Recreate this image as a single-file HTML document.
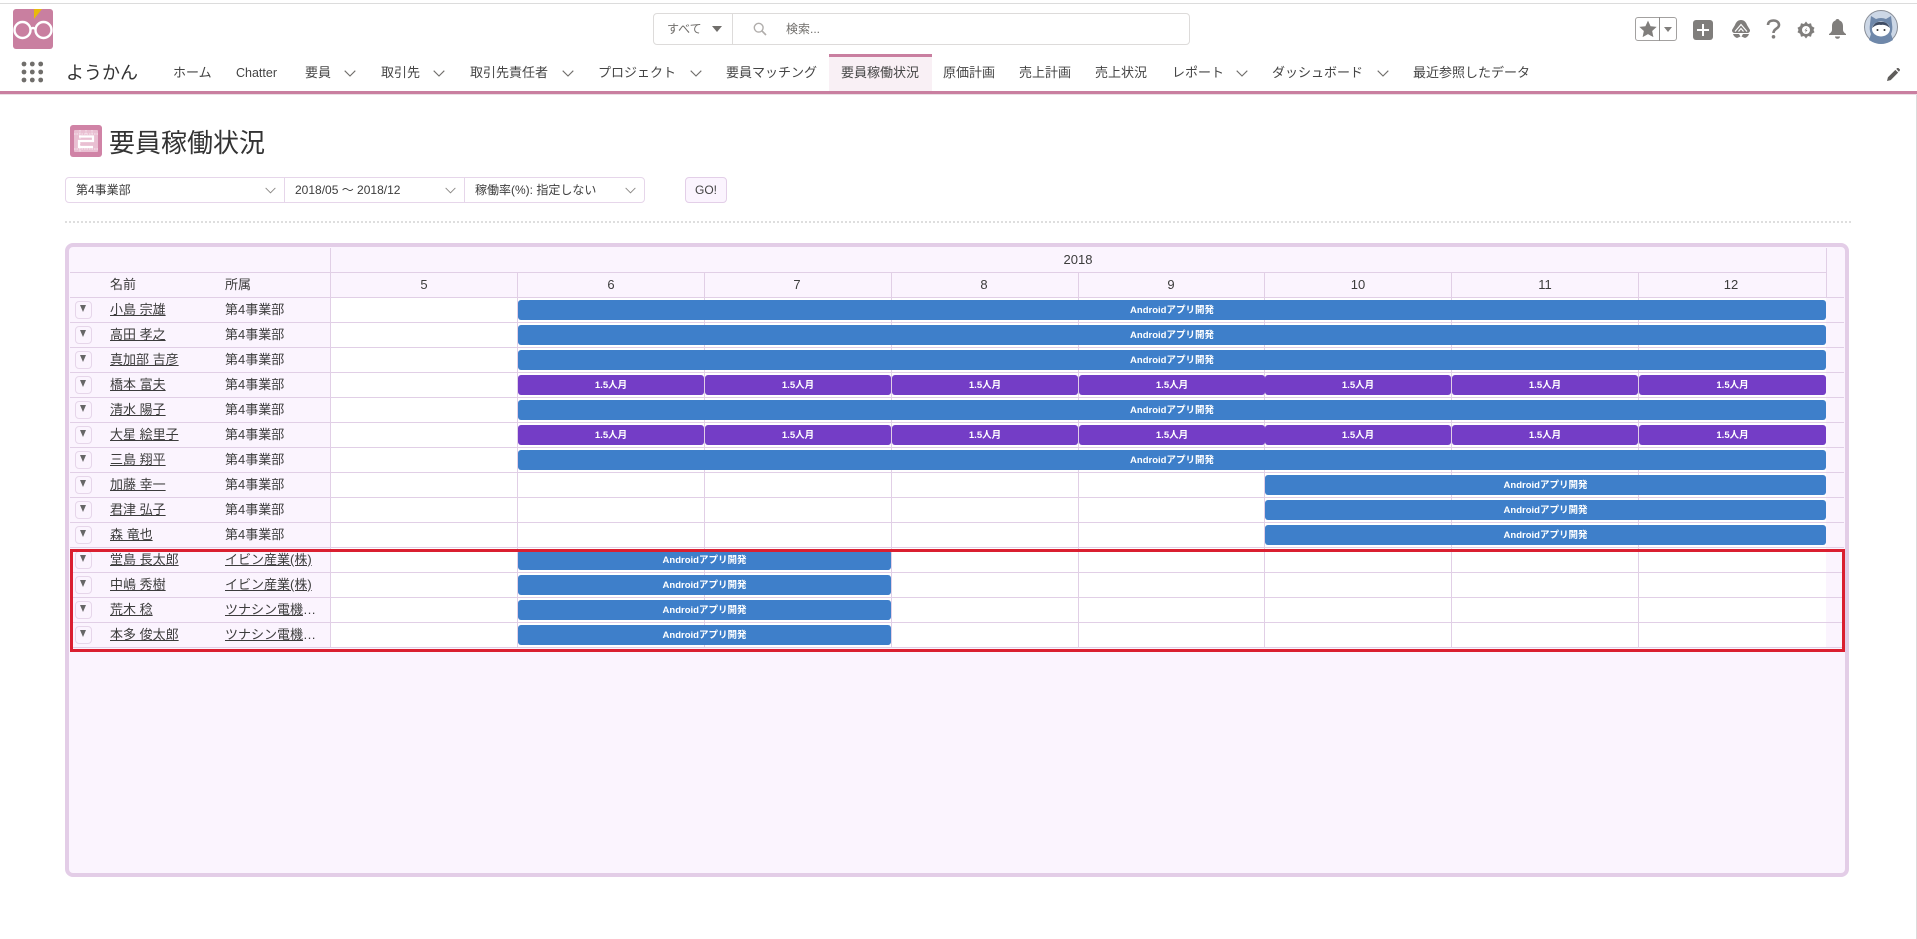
<!DOCTYPE html>
<html lang="ja"><head><meta charset="utf-8"><title>要員稼働状況</title>
<style>
*{box-sizing:border-box}
html,body{margin:0;padding:0;width:1917px;height:939px;overflow:hidden;background:#fff;font-family:"Liberation Sans","Noto Sans CJK JP",sans-serif;color:#3c3c3c}
.a{position:absolute}
.t{position:absolute;white-space:nowrap;line-height:20px;font-size:13px;color:#3c3c3c}
.nav{top:63px;color:#444}
.chev{position:absolute;width:12px;height:7px}
.r{position:absolute;left:70px;width:1774px;height:26px;border-top:1px solid #e1cfe6;border-bottom:1px solid #e1cfe6}
.w{position:absolute;top:0;bottom:0;left:261px;width:1495px;background:#fff}
.c{position:absolute;width:1px;top:272px;height:375px;background:#e1cfe6}
.dd{position:absolute;left:5px;top:3px;width:17px;height:18px;border:1px solid #e6d6ea;border-radius:4px;background:#fbf4fe}
.dd:after{content:"";position:absolute;left:4px;top:3px;border-left:3.5px solid transparent;border-right:3.5px solid transparent;border-top:7px solid #666}
.n{position:absolute;top:2px;left:40px;line-height:20px;font-size:13px;text-decoration:underline;white-space:nowrap;color:#3c3c3c}
.o{position:absolute;top:2px;left:155px;line-height:20px;font-size:13px;white-space:nowrap;color:#3c3c3c}
.b,.p{position:absolute;top:2px;height:20px;border-radius:3px;color:#fff;font-size:9.5px;font-weight:bold;text-align:center;line-height:21px;white-space:nowrap}
.b{background:#3e7fca}
.p{background:#743dc6;width:186px}
.h{position:absolute;font-size:13px;line-height:24px;text-align:center;width:186px;top:273px;color:#3c3c3c}
</style></head><body>

<div class="a" style="left:0;top:3px;width:1917px;height:1px;background:#dcdcdc"></div>

<!-- logo -->
<svg class="a" style="left:13px;top:9px" width="40" height="40" viewBox="0 0 40 40"><rect width="40" height="40" rx="3" fill="#c97fa0"/><path d="M21 0h8l-8 10z" fill="#e8b90c"/><circle cx="9.500" cy="21" r="8" fill="none" stroke="#fff" stroke-width="2.400"/><circle cx="30.500" cy="21" r="8" fill="none" stroke="#fff" stroke-width="2.400"/><path d="M17.500 20q2.500-2 5 0" fill="none" stroke="#fff" stroke-width="2.400"/></svg>

<!-- search -->
<div class="a" style="left:653px;top:13px;width:537px;height:32px;border:1px solid #dddbda;border-radius:4px;background:#fff"></div>
<div class="a" style="left:732px;top:14px;width:1px;height:30px;background:#dddbda"></div>
<div class="t" style="left:667px;top:19px;font-size:12px;color:#706e6b">すべて</div>
<div class="a" style="left:712px;top:26px;border-left:5px solid transparent;border-right:5px solid transparent;border-top:6px solid #706e6b"></div>
<svg class="a" style="left:753px;top:22px" width="14" height="14" viewBox="0 0 14 14"><circle cx="5.700" cy="5.700" r="4.400" fill="none" stroke="#b0adab" stroke-width="1.400"/><path d="M9 9l4 4" stroke="#b0adab" stroke-width="1.600"/></svg>
<div class="t" style="left:786px;top:19px;font-size:12px;color:#706e6b">検索...</div>

<!-- header right icons -->
<div class="a" style="left:1635px;top:17px;width:42px;height:24px;border:1px solid #a3a1a0;border-radius:3px"></div>
<div class="a" style="left:1659px;top:17px;width:1px;height:24px;background:#8f8d8b"></div>
<svg class="a" style="left:1639px;top:20px" width="18" height="18" viewBox="0 0 16 16"><path d="M8 .5l2.300 5 5.400.6-4 3.700 1.100 5.400L8 12.500l-4.800 2.700 1.100-5.400-4-3.700 5.400-.6z" fill="#807e7c"/></svg>
<div class="a" style="left:1664px;top:27px;border-left:4px solid transparent;border-right:4px solid transparent;border-top:5px solid #807e7c"></div>
<svg class="a" style="left:1693px;top:20px" width="20" height="20" viewBox="0 0 20 20"><rect width="20" height="20" rx="3" fill="#807e7c"/><path d="M10 4v12M4 10h12" stroke="#fff" stroke-width="2"/></svg>
<svg class="a" style="left:1732px;top:20px" width="18" height="18" viewBox="0 0 18 18"><path d="M9 0c3 0 5 2 6 5l3 5c0 2-1 3-3 3H3c-2 0-3-1-3-3l3-5c1-3 3-5 6-5z" fill="#807e7c"/><path d="M1 14h6l1.500 2.500-3.500 1.500q-3-1-4-4zM17 14h-6l-1.500 2.500 3.500 1.500q3-1 4-4z" fill="#807e7c"/><path d="M3 11.500l6-7 6 7M6.500 11.500l2.500-3 2.500 3" fill="none" stroke="#fff" stroke-width="1.200"/></svg>
<svg class="a" style="left:1766px;top:19px" width="15" height="20" viewBox="0 0 15 20"><path d="M2 6C2 3 4.300 1.500 7.500 1.500S13 3.300 13 6c0 3.800-5.500 3.500-5.500 8" fill="none" stroke="#807e7c" stroke-width="2.600"/><circle cx="7.500" cy="17.800" r="1.800" fill="#807e7c"/></svg>
<svg class="a" style="left:1797px;top:21px" width="18" height="18" viewBox="0 0 18 18"><path d="M9 .5l2 2.500 3-.8.800 3 2.700 1.500L16.500 9l1 2.300-2.700 1.500-.8 3-3-.8-2 2.500-2-2.500-3 .8-.8-3L.5 11.300 1.500 9 .5 6.700l2.700-1.500.8-3 3 .8z" fill="#807e7c"/><circle cx="9" cy="9" r="4" fill="#fff"/><path d="M10 6.500L7.500 9.500H9l-1 2.500 2.500-3H9z" fill="#807e7c"/></svg>
<svg class="a" style="left:1828px;top:19px" width="19" height="20" viewBox="0 0 19 20"><path d="M9.500 0c1 0 1.800.6 2 1.500 2.500.8 3.500 3 3.500 5.500v3.500c0 2 1 3 3 4.500v1H1v-1c2-1.500 3-2.500 3-4.500V7c0-2.500 1-4.700 3.500-5.500.2-.9 1-1.500 2-1.500z" fill="#807e7c"/><path d="M7 17.500h5c0 1.300-1 2.300-2.500 2.300S7 18.800 7 17.500z" fill="#807e7c"/></svg>
<svg class="a" style="left:1864px;top:10px" width="34" height="34" viewBox="0 0 34 34"><circle cx="17" cy="17" r="16.500" fill="#ccd7e6" stroke="#8a8f98" stroke-width="1"/><path d="M7 6l5 3q5-2 10 0l5-3 1 8q1 6-1 10l2 6q-6 4-12 4t-12-4l2-6q-2-4-1-10z" fill="#6f88aa"/><ellipse cx="17" cy="19" rx="9" ry="7.500" fill="#fff"/><path d="M8 18q3-7 9-6 6-1 9 6-5-4-9-3-4-1-9 3z" fill="#3f4c63"/><circle cx="13.500" cy="20" r="1" fill="#333"/><circle cx="20.500" cy="20" r="1" fill="#333"/></svg>

<!-- nav -->
<svg class="a" style="left:21px;top:61px" width="23" height="22" viewBox="0 0 23 22" fill="#706e6b"><circle cx="3" cy="3" r="2.400"/><circle cx="11.300" cy="3" r="2.400"/><circle cx="19.700" cy="3" r="2.400"/><circle cx="3" cy="11" r="2.400"/><circle cx="11.300" cy="11" r="2.400"/><circle cx="19.700" cy="11" r="2.400"/><circle cx="3" cy="19" r="2.400"/><circle cx="11.300" cy="19" r="2.400"/><circle cx="19.700" cy="19" r="2.400"/></svg>
<div class="t" style="left:66px;top:61px;font-size:18px;line-height:24px;color:#333">ようかん</div>

<div class="a" style="left:829px;top:54px;width:103px;height:37px;background:#f9f0f5"></div>
<div class="a" style="left:829px;top:54px;width:103px;height:3px;background:#c97fa0"></div>

<div class="t nav" style="left:173px">ホーム</div>
<div class="t nav" style="left:236px;font-size:12.500px">Chatter</div>
<div class="t nav" style="left:305px">要員</div>
<svg class="chev" style="left:344px;top:70px" viewBox="0 0 12 7"><path d="M.7.7L6 6l5.300-5.300" fill="none" stroke="#706e6b" stroke-width="1.100"/></svg>
<div class="t nav" style="left:381px">取引先</div>
<svg class="chev" style="left:433px;top:70px" viewBox="0 0 12 7"><path d="M.7.7L6 6l5.300-5.300" fill="none" stroke="#706e6b" stroke-width="1.100"/></svg>
<div class="t nav" style="left:470px">取引先責任者</div>
<svg class="chev" style="left:562px;top:70px" viewBox="0 0 12 7"><path d="M.7.7L6 6l5.300-5.300" fill="none" stroke="#706e6b" stroke-width="1.100"/></svg>
<div class="t nav" style="left:598px">プロジェクト</div>
<svg class="chev" style="left:690px;top:70px" viewBox="0 0 12 7"><path d="M.7.7L6 6l5.300-5.300" fill="none" stroke="#706e6b" stroke-width="1.100"/></svg>
<div class="t nav" style="left:726px">要員マッチング</div>
<div class="t nav" style="left:841px">要員稼働状況</div>
<div class="t nav" style="left:943px">原価計画</div>
<div class="t nav" style="left:1019px">売上計画</div>
<div class="t nav" style="left:1095px">売上状況</div>
<div class="t nav" style="left:1172px">レポート</div>
<svg class="chev" style="left:1236px;top:70px" viewBox="0 0 12 7"><path d="M.7.7L6 6l5.300-5.300" fill="none" stroke="#706e6b" stroke-width="1.100"/></svg>
<div class="t nav" style="left:1272px">ダッシュボード</div>
<svg class="chev" style="left:1377px;top:70px" viewBox="0 0 12 7"><path d="M.7.7L6 6l5.300-5.300" fill="none" stroke="#706e6b" stroke-width="1.100"/></svg>
<div class="t nav" style="left:1413px">最近参照したデータ</div>
<svg class="a" style="left:1887px;top:68px" width="13" height="13" viewBox="0 0 14 14"><path d="M0 14l1-4 8-8 3 3-8 8zM10 1l1-1q.7-.4 1.300 0l1.500 1.500q.4.600 0 1.200L12.800 4z" fill="#5f5d5b"/></svg>

<div class="a" style="left:0;top:91px;width:1917px;height:3px;background:#c97fa0"></div>
<div class="a" style="left:0;top:94px;width:1917px;height:1px;background:#eadfe4"></div>
<div class="a" style="left:1916px;top:95px;width:1px;height:844px;background:#dcdcdc"></div>

<!-- title -->
<svg class="a" style="left:70px;top:125px" width="32" height="32" viewBox="0 0 32 32"><rect width="32" height="32" rx="3" fill="#d083a6"/><rect x="4" y="5" width="24" height="22" rx="1" fill="#e9bfd2"/><path d="M4 9h24M10 5v22M16 5v4M22 5v4M4 24h24" stroke="#f6e6ee" stroke-width="1" stroke-dasharray="1.500 1" fill="none"/><path d="M9 11.500h14v4.500H9v6h14" stroke="#fff" stroke-width="2.200" fill="none"/></svg>
<div class="t" style="left:109px;top:126px;font-size:26px;line-height:34px;color:#333">要員稼働状況</div>

<!-- filters -->
<div class="a" style="left:65px;top:177px;width:580px;height:26px;border:1px solid #e6d6ea;border-radius:4px;background:#fff"></div>
<div class="a" style="left:284px;top:177px;width:1px;height:26px;background:#e6d6ea"></div>
<div class="a" style="left:464px;top:177px;width:1px;height:26px;background:#e6d6ea"></div>
<div class="t" style="left:76px;top:180px;font-size:12px">第4事業部</div>
<div class="t" style="left:295px;top:180px;font-size:12px">2018/05 ～ 2018/12</div>
<div class="t" style="left:475px;top:180px;font-size:12px">稼働率(%): 指定しない</div>
<svg class="chev" style="left:265px;top:187px;width:11px" viewBox="0 0 12 7"><path d="M.7.7L6 6l5.300-5.300" fill="none" stroke="#8a8886" stroke-width="1"/></svg>
<svg class="chev" style="left:445px;top:187px;width:11px" viewBox="0 0 12 7"><path d="M.7.7L6 6l5.300-5.300" fill="none" stroke="#8a8886" stroke-width="1"/></svg>
<svg class="chev" style="left:625px;top:187px;width:11px" viewBox="0 0 12 7"><path d="M.7.7L6 6l5.300-5.300" fill="none" stroke="#8a8886" stroke-width="1"/></svg>
<div class="a" style="left:685px;top:177px;width:42px;height:26px;border:1px solid #e3cfe8;border-radius:4px;background:#fbf4fe;text-align:center;font-size:12px;line-height:24px;color:#444">GO!</div>

<div class="a" style="left:65px;top:221px;width:1786px;height:2px;border-top:2px dotted #dedede"></div>

<!-- panel -->
<div class="a" style="left:65px;top:243px;width:1784px;height:634px;border:4.500px solid #e3cde7;border-radius:8px;background:#fbf4fe"></div>

<div class="a" style="left:70px;top:272px;width:1757px;height:1px;background:#e1cfe6"></div>
<div class="t" style="left:110px;top:275px">名前</div>
<div class="t" style="left:225px;top:275px">所属</div>
<div class="a" style="left:330px;top:248px;width:1496px;text-align:center;font-size:13px;line-height:24px;color:#3c3c3c">2018</div>
<div class="a" style="left:330px;top:248px;width:1px;height:24px;background:#e1cfe6"></div>
<div class="a" style="left:1826px;top:248px;width:1px;height:49px;background:#e1cfe6"></div>
<div class="h" style="left:331px">5</div>
<div class="h" style="left:518px">6</div>
<div class="h" style="left:704px">7</div>
<div class="h" style="left:891px">8</div>
<div class="h" style="left:1078px">9</div>
<div class="h" style="left:1265px">10</div>
<div class="h" style="left:1452px">11</div>
<div class="h" style="left:1638px">12</div>

<div class="r" style="top:297px"><div class="w"></div><div class="dd"></div><div class="n">小島 宗雄</div><div class="o">第4事業部</div></div>
<div class="r" style="top:322px"><div class="w"></div><div class="dd"></div><div class="n">高田 孝之</div><div class="o">第4事業部</div></div>
<div class="r" style="top:347px"><div class="w"></div><div class="dd"></div><div class="n">真加部 吉彦</div><div class="o">第4事業部</div></div>
<div class="r" style="top:372px"><div class="w"></div><div class="dd"></div><div class="n">橋本 富夫</div><div class="o">第4事業部</div></div>
<div class="r" style="top:397px"><div class="w"></div><div class="dd"></div><div class="n">清水 陽子</div><div class="o">第4事業部</div></div>
<div class="r" style="top:422px"><div class="w"></div><div class="dd"></div><div class="n">大星 絵里子</div><div class="o">第4事業部</div></div>
<div class="r" style="top:447px"><div class="w"></div><div class="dd"></div><div class="n">三島 翔平</div><div class="o">第4事業部</div></div>
<div class="r" style="top:472px"><div class="w"></div><div class="dd"></div><div class="n">加藤 幸一</div><div class="o">第4事業部</div></div>
<div class="r" style="top:497px"><div class="w"></div><div class="dd"></div><div class="n">君津 弘子</div><div class="o">第4事業部</div></div>
<div class="r" style="top:522px"><div class="w"></div><div class="dd"></div><div class="n">森 竜也</div><div class="o">第4事業部</div></div>
<div class="r" style="top:547px"><div class="w"></div><div class="dd"></div><div class="n">堂島 長太郎</div><div class="o"><u>イビン産業(株)</u></div></div>
<div class="r" style="top:572px"><div class="w"></div><div class="dd"></div><div class="n">中嶋 秀樹</div><div class="o"><u>イビン産業(株)</u></div></div>
<div class="r" style="top:597px"><div class="w"></div><div class="dd"></div><div class="n">荒木 稔</div><div class="o"><u>ツナシン電機</u>…</div></div>
<div class="r" style="top:622px"><div class="w"></div><div class="dd"></div><div class="n">本多 俊太郎</div><div class="o"><u>ツナシン電機</u>…</div></div>

<div class="c" style="left:330px"></div><div class="c" style="left:517px"></div><div class="c" style="left:704px"></div><div class="c" style="left:891px"></div><div class="c" style="left:1078px"></div><div class="c" style="left:1264px"></div><div class="c" style="left:1451px"></div><div class="c" style="left:1638px"></div>

<div class="a" style="left:0;top:0;width:0;height:0">
<div class="b" style="left:518px;top:300px;width:1308px">Androidアプリ開発</div>
<div class="b" style="left:518px;top:325px;width:1308px">Androidアプリ開発</div>
<div class="b" style="left:518px;top:350px;width:1308px">Androidアプリ開発</div>
<div class="p" style="left:518px;top:375px">1.5人月</div><div class="p" style="left:705px;top:375px">1.5人月</div><div class="p" style="left:892px;top:375px">1.5人月</div><div class="p" style="left:1079px;top:375px">1.5人月</div><div class="p" style="left:1265px;top:375px">1.5人月</div><div class="p" style="left:1452px;top:375px">1.5人月</div><div class="p" style="left:1639px;top:375px;width:187px">1.5人月</div>
<div class="b" style="left:518px;top:400px;width:1308px">Androidアプリ開発</div>
<div class="p" style="left:518px;top:425px">1.5人月</div><div class="p" style="left:705px;top:425px">1.5人月</div><div class="p" style="left:892px;top:425px">1.5人月</div><div class="p" style="left:1079px;top:425px">1.5人月</div><div class="p" style="left:1265px;top:425px">1.5人月</div><div class="p" style="left:1452px;top:425px">1.5人月</div><div class="p" style="left:1639px;top:425px;width:187px">1.5人月</div>
<div class="b" style="left:518px;top:450px;width:1308px">Androidアプリ開発</div>
<div class="b" style="left:1265px;top:475px;width:561px">Androidアプリ開発</div>
<div class="b" style="left:1265px;top:500px;width:561px">Androidアプリ開発</div>
<div class="b" style="left:1265px;top:525px;width:561px">Androidアプリ開発</div>
<div class="b" style="left:518px;top:550px;width:373px">Androidアプリ開発</div>
<div class="b" style="left:518px;top:575px;width:373px">Androidアプリ開発</div>
<div class="b" style="left:518px;top:600px;width:373px">Androidアプリ開発</div>
<div class="b" style="left:518px;top:625px;width:373px">Androidアプリ開発</div>
</div>

<!-- red highlight -->
<div class="a" style="left:70px;top:549px;width:1775px;height:103px;border:3px solid #da1f30"></div>
</body></html>
